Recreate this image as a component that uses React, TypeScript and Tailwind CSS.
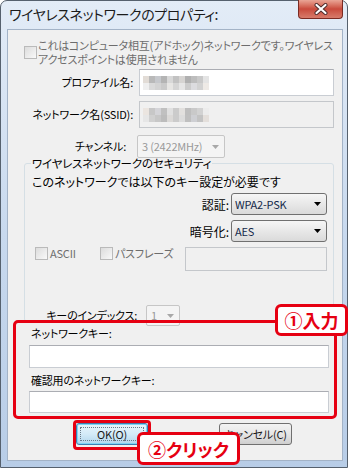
import React from "react";

function Arrow({ className }: { className: string }) {
  return (
    <svg width="7" height="4" viewBox="0 0 7 4" className={className}>
      <path d="M0 0h7L3.5 4z" />
    </svg>
  );
}

function Check() {
  return (
    <span className="block w-[13px] h-[13px] shrink-0 border border-[#bababa] bg-gradient-to-br from-[#dcdcdc] to-[#f9f9f9]" />
  );
}

const blurA = [
  "bg-[#e2dcd6]", "bg-[#b9b9b9]", "bg-[#c6c8cc]", "bg-[#b4b4b4]", "bg-[#d8d8d8]", "bg-[#c2c2c2]",
  "bg-[#d6d4d2]", "bg-[#b0b0b0]", "bg-[#bdbdbd]", "bg-[#c9c9c9]", "bg-[#e4e4e4]",
];
const blurB = [
  "bg-[#ebe5e0]", "bg-[#c7c7c7]", "bg-[#d4d4d8]", "bg-[#c0c0c0]", "bg-[#e0e0e0]", "bg-[#cbcbcb]",
  "bg-[#e2e0de]", "bg-[#bebebe]", "bg-[#c9c9c9]", "bg-[#d2d2d2]", "bg-[#ececec]",
];

function Blur({ dim }: { dim?: boolean }) {
  const a = dim ? blurB : blurA;
  const b = dim ? blurA.slice().reverse() : blurB.slice().reverse();
  return (
    <div className="flex flex-col">
      <div className="flex">
        {a.map((c, i) => (
          <span key={i} className={`block w-[6px] h-[7px] ${c}`} />
        ))}
      </div>
      <div className="flex opacity-80">
        {b.map((c, i) => (
          <span key={i} className={`block w-[6px] h-[7px] ${c}`} />
        ))}
      </div>
    </div>
  );
}

export default function App() {
  return (
    <div className="w-[352px] h-[469px] bg-white relative overflow-hidden text-[11px] leading-[13px] tracking-[-0.2px] text-black font-['Noto_Sans_CJK_JP',sans-serif] [font-feature-settings:'palt']">
      <div className="w-[348px] h-[468px] border border-[#56616e] rounded-t-[7px] bg-gradient-to-b from-[#e3ecf7] via-[#c8d9ee] to-[#b8cde7] flex flex-col">
        {/* title bar */}
        <div className="h-[28px] flex items-start justify-between">
          <span className="pl-[8px] pt-[5px] text-[14px] leading-[16px] tracking-[-0.4px] text-[#1b1b1b] whitespace-nowrap">
            ワイヤレスネットワークのプロパティ:
          </span>
          <div className="mr-[4px] -mt-px w-[45px] h-[19px] rounded-b-[4px] border border-t-0 border-[#7b2b23] bg-gradient-to-b from-[#e9a596] via-[#c94a3c] to-[#d77b6b] flex items-center justify-center">
            <svg width="14" height="12" viewBox="0 0 14 12">
              <path d="M2.5 2l9 8M11.5 2l-9 8" stroke="#4a2a2a" strokeWidth="4" strokeLinecap="round" />
              <path d="M2.5 2l9 8M11.5 2l-9 8" stroke="#ffffff" strokeWidth="2.2" strokeLinecap="round" />
            </svg>
          </div>
        </div>

        {/* panel */}
        <div className="ml-[6px] w-[336px] h-[432px] border border-[#a3b3c7] bg-[#f0f0f0] flex flex-col">
          {/* adhoc checkbox */}
          <div className="mt-[8px] pl-[16px] flex items-center gap-[1px] text-[#6d6d6d]">
            <Check />
            <div className="flex flex-col whitespace-nowrap leading-[14px]">
              <span>これはコンピュータ相互(アドホック)ネットワークです。ワイヤレス</span>
              <span>アクセスポイントは使用されません</span>
            </div>
          </div>

          {/* profile */}
          <div className="mt-[3px] h-[27px] flex items-center">
            <span className="w-[125px] text-right">プロファイル名:</span>
            <div className="ml-[6px] w-[195px] h-full bg-white border border-[#c9cdd3] border-t-[#abadb3] flex items-center pl-[3px]">
              <Blur />
            </div>
          </div>

          {/* ssid */}
          <div className="mt-[5px] h-[27px] flex items-center">
            <span className="w-[125px] text-right">ネットワーク名(SSID):</span>
            <div className="ml-[6px] w-[195px] h-full bg-[#f0f0f0] border border-[#c4c7cb] flex items-center pl-[3px]">
              <Blur dim />
            </div>
          </div>

          {/* channel */}
          <div className="mt-[7px] h-[23px] flex items-center">
            <span className="w-[118px] text-right">チャンネル:</span>
            <div className="ml-[11px] w-[88px] h-full rounded-[2px] border border-[#c6c6c6] bg-[#f4f4f4] flex items-center justify-between pl-[4px] pr-[5px] text-[#9a9a9a]">
              <span>3 (2422MHz)</span>
              <Arrow className="fill-[#a8a8a8]" />
            </div>
          </div>

          {/* security group */}
          <fieldset className="ml-[16px] w-[310px] h-[164px] border border-[#d5dfe5] rounded-[3px] flex flex-col">
            <legend className="ml-[6px] px-[1px] leading-[10px] text-[11.5px]">ワイヤレスネットワークのセキュリティ</legend>
            <div className="pt-[7px] pl-[7px] text-[12px] tracking-normal">このネットワークでは以下のキー設定が必要です</div>

            <div className="mt-[5px] h-[22px] flex items-center justify-end pr-[6px]">
              <span className="text-[12px] tracking-normal">認証:</span>
              <div className="ml-[2px] w-[96px] h-full rounded-[3px] border border-[#707070] bg-gradient-to-b from-[#f6f6f6] to-[#dadada] flex items-center justify-between pl-[3px] pr-[5px] text-[#13284a]">
                <span>WPA2-PSK</span>
                <Arrow className="fill-black" />
              </div>
            </div>

            <div className="mt-[5px] h-[22px] flex items-center justify-end pr-[6px]">
              <span className="text-[12px] tracking-normal">暗号化:</span>
              <div className="ml-[2px] w-[96px] h-full rounded-[3px] border border-[#707070] bg-gradient-to-b from-[#f6f6f6] to-[#dadada] flex items-center justify-between pl-[3px] pr-[5px] text-[#13284a]">
                <span>AES</span>
                <Arrow className="fill-black" />
              </div>
            </div>

            <div className="mt-[5px] h-[24px] flex items-start pl-[10px] text-[#6d6d6d]">
              <div className="w-[65px] flex items-center gap-[2px]">
                <Check />
                <span>ASCII</span>
              </div>
              <div className="flex items-center gap-[2px]">
                <Check />
                <span>パスフレーズ</span>
              </div>
              <div className="ml-auto mr-[6px] w-[142px] h-full border border-[#c4c7cb] bg-[#f0f0f0]" />
            </div>

            <div className="mt-[34px] h-[21px] flex items-center">
              <span className="w-[112px] text-right">キーのインデックス:</span>
              <div className="ml-[9px] w-[34px] h-full rounded-[2px] border border-[#c6c6c6] bg-[#f4f4f4] flex items-center justify-between pl-[4px] pr-[5px] text-[#9a9a9a]">
                <span>1</span>
                <Arrow className="fill-[#a8a8a8]" />
              </div>
            </div>
          </fieldset>

          {/* network key */}
          <div className="mt-[5px] pl-[23px]">ネットワークキー:</div>
          <div className="mt-[5px] ml-[21px] w-[300px] h-[23px] bg-white border border-[#c9cdd3] border-t-[#abadb3]" />
          <div className="mt-[6px] pl-[23px]">確認用のネットワークキー:</div>
          <div className="mt-[4px] ml-[21px] w-[300px] h-[22px] bg-white border border-[#c9cdd3] border-t-[#abadb3]" />

          {/* buttons */}
          <div className="mt-[10px] h-[22px] flex">
            <div className="ml-[68px] w-[72px] h-full rounded-[3px] border border-[#3c7fb1] bg-gradient-to-b from-[#e8f5fc] via-[#d4ebf8] to-[#b2d6ec] shadow-[inset_0_0_0_1px_#7fd3f4] flex p-[3px]">
              <div className="flex-1 border border-dotted border-[#6b7a88] flex items-center justify-center text-[#1a1a1a]">
                OK(O)
              </div>
            </div>
            <div className="ml-[71px] w-[73px] h-full rounded-[3px] border border-[#707070] bg-gradient-to-b from-[#f3f3f3] via-[#e6e6e6] to-[#cfcfcf] flex items-center justify-center text-[#1a1a1a]">
              キャンセル(C)
            </div>
          </div>
        </div>
      </div>

      {/* annotations */}
      <div className="absolute left-[13px] top-[320px] w-[324px] h-[99px] border-[3px] border-[#e60012] rounded-[5px]" />
      <div className="absolute left-[275px] top-[304px] w-[73px] h-[32px] border-[3px] border-[#e60012] rounded-[6px] bg-white flex items-center justify-center text-[#e60012] text-[18px] leading-[20px] font-bold tracking-normal">
        ①入力
      </div>
      <div className="absolute left-[73px] top-[420px] w-[78px] h-[30px] border-[3px] border-[#e60012] rounded-[4px]" />
      <div className="absolute left-[137px] top-[432px] w-[103px] h-[33px] border-[3px] border-[#e60012] rounded-[6px] bg-white flex items-center justify-center text-[#e60012] text-[18px] leading-[20px] font-bold tracking-normal">
        ②クリック
      </div>
    </div>
  );
}
